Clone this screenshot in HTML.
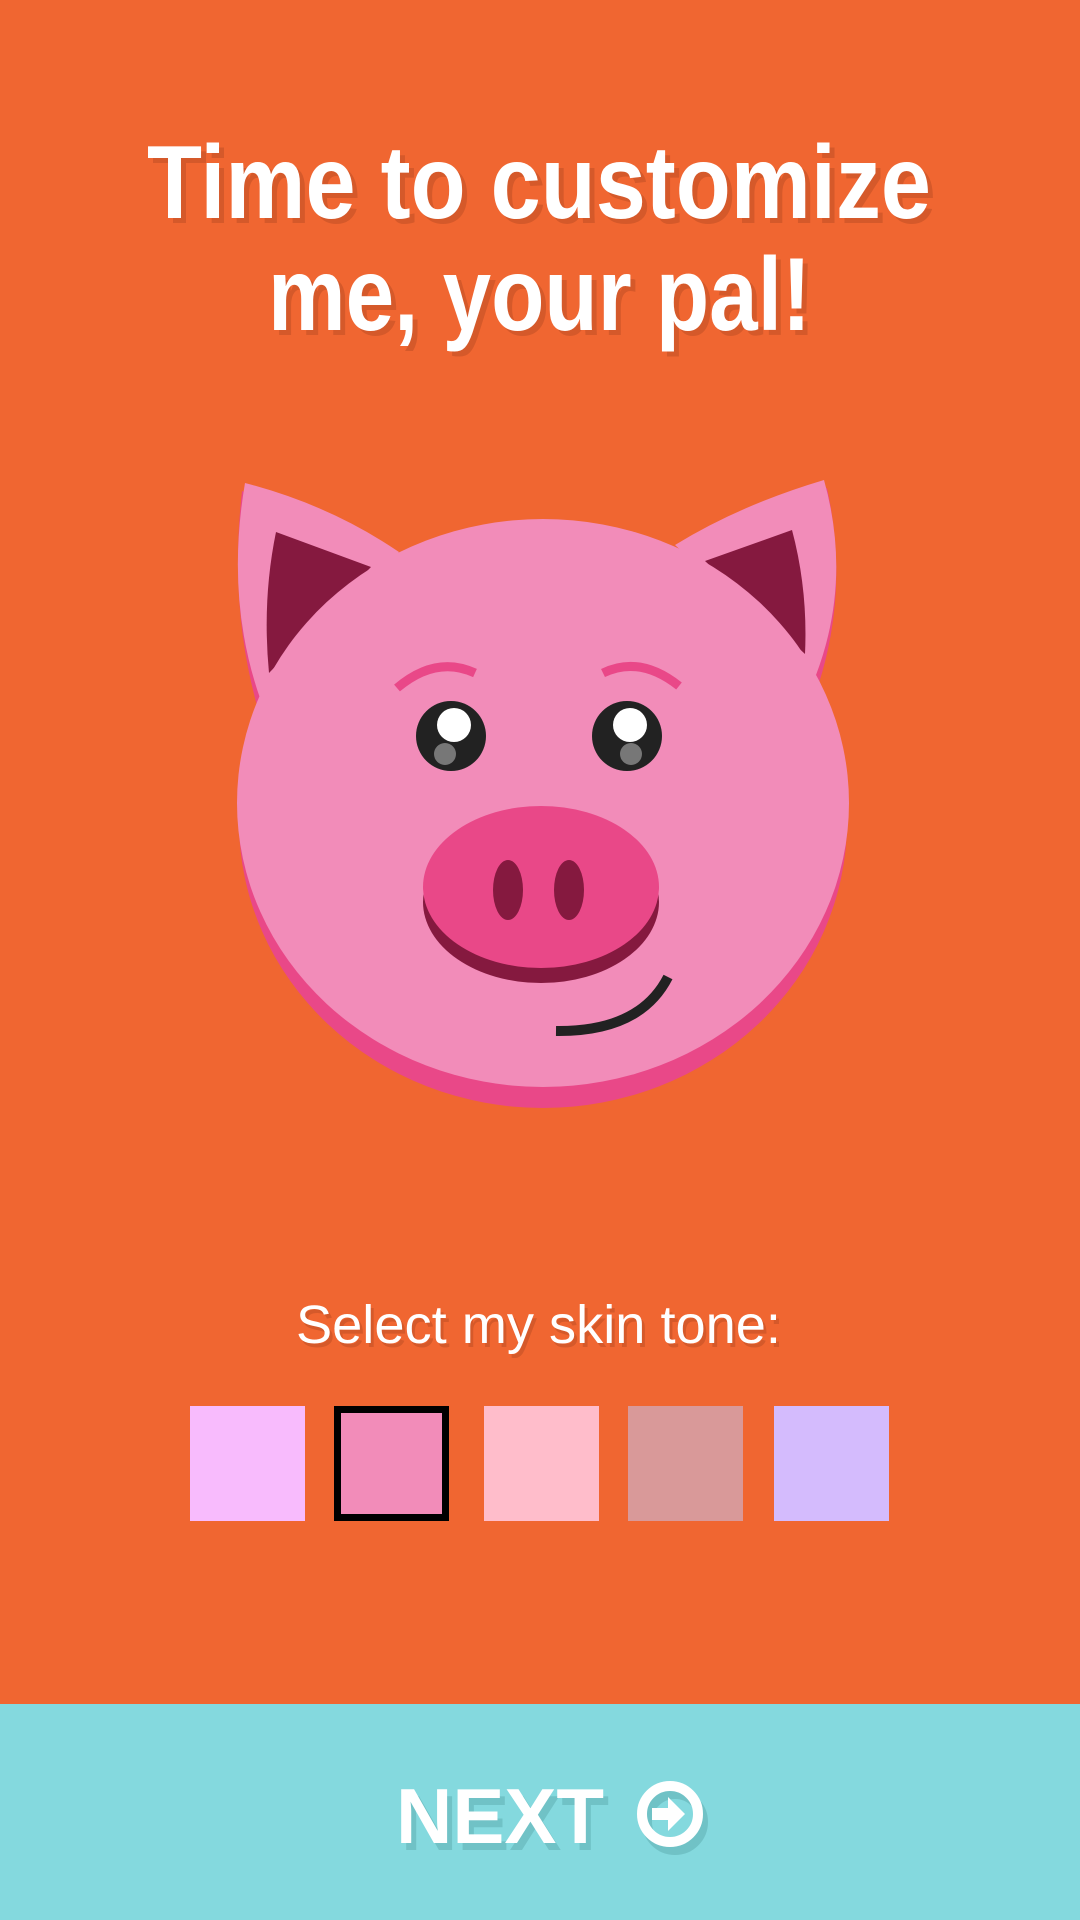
<!DOCTYPE html>
<html><head><meta charset="utf-8"><style>
html,body{margin:0;padding:0;width:1080px;height:1920px;overflow:hidden;background:#f06631}
svg{display:block}
</style></head><body>
<svg width="1080" height="1920" viewBox="0 0 1080 1920" xmlns="http://www.w3.org/2000/svg">
<rect width="1080" height="1920" fill="#f06631"/>
<g font-family="Liberation Sans, sans-serif" font-weight="bold" font-size="104">
<text x="152" y="223" textLength="784" lengthAdjust="spacingAndGlyphs" fill="#d5592a">Time to customize</text>
<text x="273" y="335" textLength="543" lengthAdjust="spacingAndGlyphs" fill="#d5592a">me, your pal!</text>
<text x="147" y="218" textLength="784" lengthAdjust="spacingAndGlyphs" fill="#fff">Time to customize</text>
<text x="268" y="330" textLength="543" lengthAdjust="spacingAndGlyphs" fill="#fff">me, your pal!</text>
</g>
<!-- pig -->
<path d="M245 483 L399 552 L261 701 Q232 600 245 483Z" fill="#e94888" transform="translate(-3,8)"/>
<path d="M824 480 L675 545 L816 675 Q846 580 824 480Z" fill="#e94888" transform="translate(3,8)"/>
<path d="M245 483 Q330 505 399 552 L261 701 Q225 600 245 483Z" fill="#f28cb9"/>
<path d="M824 480 Q740 505 675 545 L816 675 Q852 580 824 480Z" fill="#f28cb9"/>
<path d="M276 532 L371 567 L269 673 Q262 600 276 532Z" fill="#85193f"/>
<path d="M792 530 L705 561 L805 654 Q808 590 792 530Z" fill="#85193f"/>
<ellipse cx="543" cy="822" rx="304" ry="286" fill="#e94888"/>
<ellipse cx="543" cy="803" rx="306" ry="284" fill="#f28cb9"/>
<path d="M397 688 Q436 655 475 673" stroke="#e94888" stroke-width="9" fill="none"/>
<path d="M603 673 Q640 655 679 686" stroke="#e94888" stroke-width="9" fill="none"/>
<circle cx="451" cy="736" r="35" fill="#222"/>
<circle cx="627" cy="736" r="35" fill="#222"/>
<circle cx="454" cy="725" r="17" fill="#fff"/>
<circle cx="630" cy="725" r="17" fill="#fff"/>
<circle cx="445" cy="754" r="11" fill="#777"/>
<circle cx="631" cy="754" r="11" fill="#777"/>
<ellipse cx="541" cy="902" rx="118" ry="81" fill="#85193f"/>
<ellipse cx="541" cy="887" rx="118" ry="81" fill="#e94888"/>
<ellipse cx="508" cy="890" rx="15" ry="30" fill="#85193f"/>
<ellipse cx="569" cy="890" rx="15" ry="30" fill="#85193f"/>
<path d="M556 1031 Q640 1032 668 977" stroke="#222" stroke-width="10" fill="none" stroke-linecap="butt"/>
<!-- select -->
<g font-family="Liberation Sans, sans-serif" font-size="54">
<text x="299" y="1347" textLength="485" lengthAdjust="spacingAndGlyphs" fill="#d5592a">Select my skin tone:</text>
<text x="296" y="1343" textLength="485" lengthAdjust="spacingAndGlyphs" fill="#fff">Select my skin tone:</text>
</g>
<rect x="190" y="1406" width="115" height="115" fill="#f8bbfd"/>
<rect x="334" y="1406" width="115" height="115" fill="#000"/>
<rect x="341" y="1413" width="101" height="101" fill="#f28cb9"/>
<rect x="484" y="1406" width="115" height="115" fill="#ffbdcb"/>
<rect x="628" y="1406" width="115" height="115" fill="#d99999"/>
<rect x="774" y="1406" width="115" height="115" fill="#d4bbfd"/>
<!-- next -->
<rect x="0" y="1704" width="1080" height="216" fill="#84d9de"/>
<g font-family="Liberation Sans, sans-serif" font-weight="bold" font-size="78">
<text x="401" y="1850" textLength="208" lengthAdjust="spacingAndGlyphs" fill="#70c2c6">NEXT</text>
<text x="396" y="1843" textLength="208" lengthAdjust="spacingAndGlyphs" fill="#fff">NEXT</text>
</g>
<circle cx="675" cy="1822" r="28" fill="none" stroke="#70c2c6" stroke-width="10"/>
<circle cx="670" cy="1814" r="28" fill="none" stroke="#fff" stroke-width="10"/>
<path d="M652 1808 H668 V1797 L685 1814 L668 1831 V1820 H652Z" fill="#fff"/>
</svg>
</body></html>
